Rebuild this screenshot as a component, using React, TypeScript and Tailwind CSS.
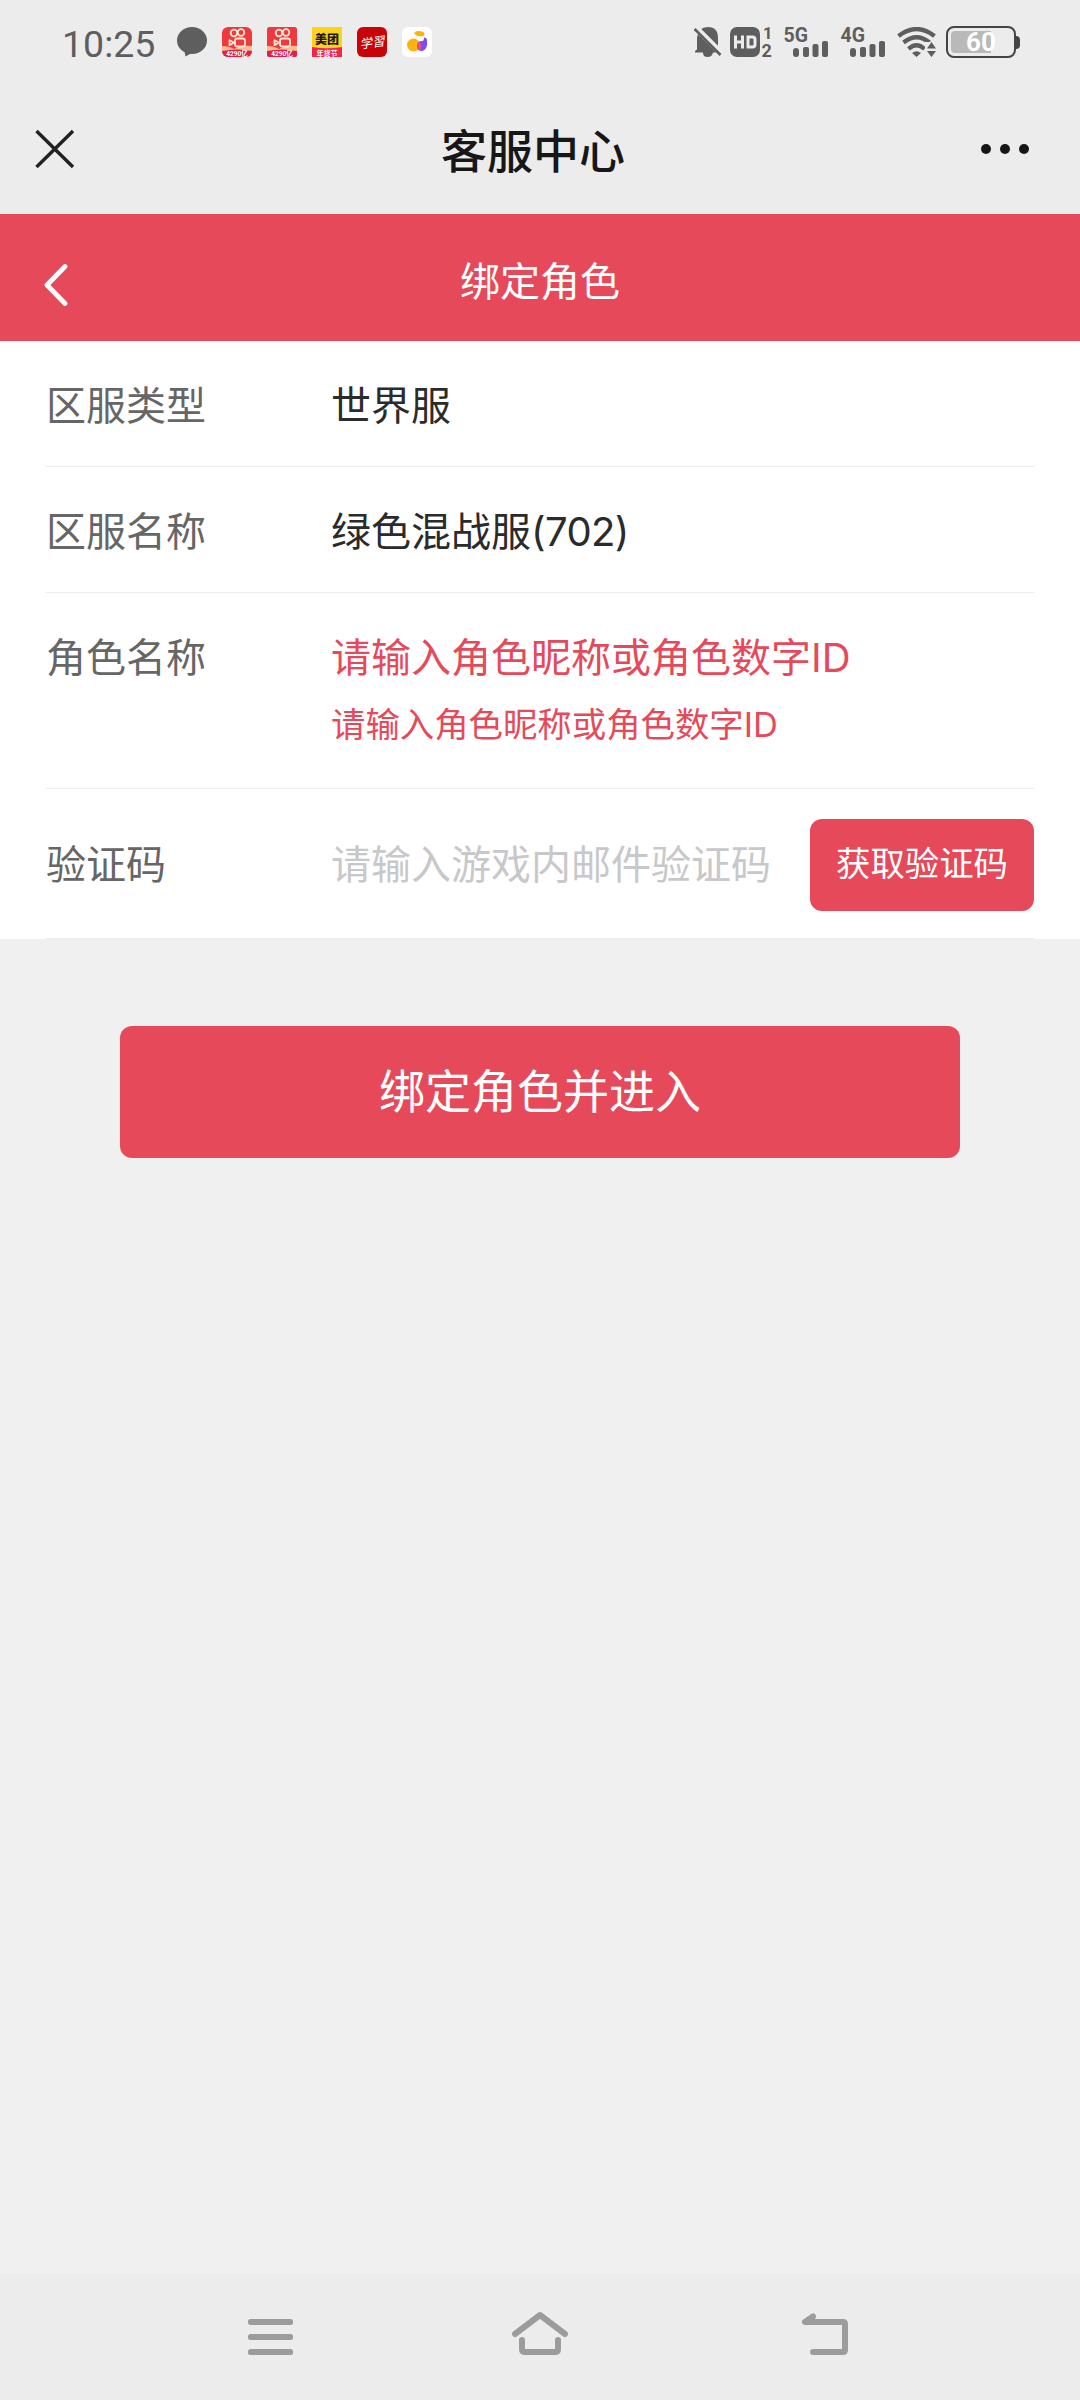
import React, { useState } from 'react';

const KuaishouIcon = ({ square = false }: { square?: boolean }) => (
    <svg width="30" height="30" viewBox="0 0 30 30">
        <clipPath id={square ? 'ks-square' : 'ks-round'}>
            <rect width="30" height="30" rx={square ? 2.5 : 6} />
        </clipPath>
        <g clipPath={square ? 'url(#ks-square)' : 'url(#ks-round)'}>
            <rect width="30" height="30" fill="#f0393f" />
            <path d="M0 19q7 0 12 3q8-4 18-3v11H0z" fill="#f6c08a" />
            <path d="M0 24q15-3 30 0v6H0z" fill="#e01f4c" />
            <g fill="none" stroke="#ffe9d6" strokeWidth="1.800">
                <circle cx="12" cy="6" r="3.300" />
                <circle cx="19" cy="5.500" r="3.300" />
                <rect x="13" y="11.500" width="10" height="8" rx="2.200" />
                <path d="M12 15.500l-4.500-2.300v5z" strokeLinejoin="round" />
            </g>
            <text x="15" y="28.500" textAnchor="middle" fontSize="6.500" fontWeight="700" fill="#fff" className="font-['Roboto','Noto_Sans_CJK_SC',sans-serif]">
                4290亿
            </text>
        </g>
    </svg>
);

const MeituanIcon = () => (
    <svg width="30" height="30" viewBox="0 0 30 30" className="font-['Noto_Sans_CJK_SC',sans-serif]">
        <rect width="30" height="30" fill="#fdd21f" />
        <path d="M0 20q15 2.500 30 0v10H0z" fill="#f5244f" />
        <text x="15" y="16.500" textAnchor="middle" fontSize="12" fontWeight="900" fill="#1c1a12">美团</text>
        <text x="15" y="28.500" textAnchor="middle" fontSize="7" fontWeight="700" fill="#fff">年货节</text>
    </svg>
);

const XuexiIcon = () => (
    <svg width="30" height="30" viewBox="0 0 30 30">
        <rect width="30" height="30" rx="6" fill="#c90409" />
        <text
            x="15"
            y="20"
            textAnchor="middle"
            fontSize="12.500"
            fill="#fff"
            transform="rotate(-8 15 15)"
            className="font-['Noto_Sans_CJK_SC',sans-serif] italic"
        >
            学習
        </text>
    </svg>
);

const FruitIcon = () => (
    <svg width="30" height="30" viewBox="0 0 30 30">
        <rect width="30" height="30" rx="6" fill="#fff" />
        <circle cx="11.500" cy="18" r="6.500" fill="#fbb40e" />
        <path d="M12.500 5q4-2 9 0q1.500 1.500 1 3.500q-5 2-9-.500q-1.500-1.500-1-3z" fill="#fbb40e" />
        <path d="M22 10.500q3 0 3 3q1 9-5 10.500q-5 0-5-5t5-5q2 0 2-3.500z" fill="#7b4df5" />
        <path d="M17.500 14.500q4 5 .500 9q-3-1.500-3-4.500t2.500-4.500z" fill="#f5477c" />
    </svg>
);

const Signal = ({ label }: { label: string }) => (
    <svg width="45" height="30" viewBox="0 0 45 30" fill="#5e5e5e" className="overflow-visible">
        <text x="-.500" y="14.500" fontSize="19.500" fontWeight="700" className="font-['Roboto',sans-serif]">{label}</text>
        <rect x="9" y="21" width="6" height="9" rx="3" />
        <rect x="19" y="20" width="6" height="10" rx="2" />
        <rect x="28.500" y="17" width="6" height="13" rx="2" />
        <rect x="38" y="14" width="6" height="16" rx="2" />
    </svg>
);

const StatusBar = () => (
    <div className="flex h-[84px] items-start justify-between pl-[62px] pr-[60px] pt-[27px] text-[#5e5e5e]">
        <div className="flex h-[30px] items-center">
            <span className="w-[115px] pt-[4px] font-['Roboto',sans-serif] text-[37.500px] leading-[32px]">10:25</span>
            <div className="flex gap-[15px]">
                <svg width="30" height="30" viewBox="0 0 30 30">
                    <ellipse cx="15" cy="13.500" rx="15" ry="13.500" fill="#5e5e5e" />
                    <path d="M7 22l1.500 7.500l9-5z" fill="#5e5e5e" />
                </svg>
                <KuaishouIcon />
                <KuaishouIcon square />
                <MeituanIcon />
                <XuexiIcon />
                <FruitIcon />
            </div>
        </div>

        <div className="flex h-[30px] items-center">
            <svg width="28" height="30" viewBox="0 0 28 30" className="mr-[8px]">
                <path d="M3 22.500V11Q4 0 14 0T24 11v8l3 5.500v1H19Q18 30 13.500 30T9 25.500H1V24z" fill="#5e5e5e" />
                <path d="M1 0L28 27" stroke="#ececec" strokeWidth="6" />
                <path d="M.500 2L26.500 28" stroke="#5e5e5e" strokeWidth="2.600" />
            </svg>
            <svg width="43" height="30" viewBox="0 0 43 30" className="mr-[11px] overflow-visible font-['Roboto',sans-serif]" fill="#5e5e5e">
                <rect width="30" height="30" rx="7" />
                <g fill="none" stroke="#ececec" strokeWidth="3">
                    <path d="M5.500 8.500v13M12.500 8.500v13M5.500 15h7" />
                    <path d="M18 10h4.500q2.500 0 2.500 2.500v5q0 2.500-2.500 2.500H18z" />
                </g>
                <text x="33" y="12" fontSize="16.500" fontWeight="700">1</text>
                <text x="31.500" y="30" fontSize="18" fontWeight="700">2</text>
            </svg>
            <Signal label="5G" />
            <div className="w-[12px]" />
            <Signal label="4G" />
            <svg width="40" height="30" viewBox="0 0 40 30" className="ml-[11px] mr-[9px]">
                <g fill="none" stroke="#5e5e5e" strokeWidth="4.200">
                    <path d="M1.500 9Q19.500-5 37.500 9" />
                    <path d="M6.500 15.500Q19.500 5 32.500 15.500" />
                    <path d="M11.500 22Q19.500 14.500 27.500 22" />
                </g>
                <path d="M15 26q4.500-3.500 9 0l-4.500 4z" fill="#5e5e5e" />
                <path d="M28 15h12v15H28z" fill="#ececec" />
                <path d="M30 21.500h9L34.500 15zM30 24h9l-4.500 6z" fill="#5e5e5e" />
            </svg>
            <div className="flex items-center">
                <div className="relative h-[32px] w-[70px] rounded-[8px] border-2 border-[#454545] p-[3px]">
                    <div className="h-full w-[40px] rounded-l-[4px] bg-[#b9b9b9]" />
                    <span className="absolute inset-0 text-center font-['Roboto',sans-serif] text-[26px] font-bold leading-[29px] text-white">60</span>
                </div>
                <div className="h-[13px] w-[4px] rounded-r-[4px] bg-[#454545]" />
            </div>
        </div>
    </div>
);

const TitleBar = () => (
    <div className="flex h-[130px] items-center justify-between pl-[35px] pr-[51px]">
        <svg width="40" height="40" viewBox="0 0 40 40" className="mb-[1px]">
            <path d="M1.500 2L38 38M38 2L1.500 38" stroke="#222" strokeWidth="3.400" />
        </svg>
        <h1 className="ml-[10px] pt-[4px] text-[46px] font-medium leading-none text-[#171717]">客服中心</h1>
        <div className="flex gap-[9px]">
            <i className="size-[10px] rounded-full bg-[#161616]" />
            <i className="size-[10px] rounded-full bg-[#161616]" />
            <i className="size-[10px] rounded-full bg-[#161616]" />
        </div>
    </div>
);

const Row = ({ label, className, children }: { label: string; className: string; children: React.ReactNode }) => (
    <div className={`flex border-b border-[#ededed] ${className}`}>
        <span className="w-[285px] shrink-0 text-[#666]">{label}</span>
        {children}
    </div>
);

export default function App() {
    const [code, setCode] = useState('');

    return (
        <div className="flex h-[2400px] w-[1080px] flex-col overflow-hidden bg-[#f0f0f0] font-['Inter','Noto_Sans_CJK_SC',sans-serif]">
            <header className="bg-[#ececec]">
                <StatusBar />
                <TitleBar />
            </header>

            {/* Page header */}
            <div className="grid h-[127px] grid-cols-[1fr_auto_1fr] items-center bg-[#e64a5a] text-white">
                <svg width="26" height="44" viewBox="0 0 26 44" className="ml-[42px] mt-[15px]">
                    <path d="M23 3.500L5 22l18 18.500" fill="none" stroke="#fff" strokeWidth="4.800" strokeLinecap="round" strokeLinejoin="round" />
                </svg>
                <h2 className="pt-[8px] text-[40px] leading-none">绑定角色</h2>
            </div>

            {/* Form */}
            <section className="bg-white px-[46px] text-[40px] leading-none text-[#2b2b2b]">
                <Row label="区服类型" className="h-[126px] items-center pt-[4px]">
                    <span>世界服</span>
                </Row>
                <Row label="区服名称" className="h-[126px] items-center pt-[4px]">
                    <span>绿色混战服<span className="tracking-[-0.6px]">(702)</span></span>
                </Row>
                <Row label="角色名称" className="h-[196px] items-start pt-[45px]">
                    <div className="text-[#e64a5a]">
                        <p>请输入角色昵称或角色数字ID</p>
                        <p className="mt-[30px] text-[34.400px]">请输入角色昵称或角色数字ID</p>
                    </div>
                </Row>
                <Row label="验证码" className="h-[150px] items-center pt-[2px]">
                    <input
                        value={code}
                        onChange={(e) => setCode(e.target.value)}
                        placeholder="请输入游戏内邮件验证码"
                        className="h-[60px] w-[460px] outline-none placeholder:text-[#c8c8ca]"
                    />
                    <button className="ml-auto h-[92px] w-[224px] rounded-[12px] bg-[#e64a5a] text-[34.400px] leading-none text-white">
                        获取验证码
                    </button>
                </Row>
            </section>

            <button className="mx-[120px] mt-[87px] h-[132px] rounded-[12px] bg-[#e64a5a] pb-[3px] text-[46px] leading-none text-white">
                绑定角色并进入
            </button>

            {/* System navigation */}
            <nav className="mt-auto flex h-[126px] items-start bg-[#ececec] pl-[247px] pt-[36px]">
                <svg width="46" height="50" viewBox="0 0 46 50" fill="#9c9c9c">
                    <rect x="1" y="9" width="45" height="6" rx="2.500" />
                    <rect x="1" y="24" width="45" height="6" rx="2.500" />
                    <rect x="1" y="39" width="45" height="6" rx="2.500" />
                </svg>
                <svg width="60" height="50" viewBox="0 0 60 50" fill="none" stroke="#9c9c9c" strokeWidth="6" strokeLinecap="round" strokeLinejoin="round" className="ml-[217px]">
                    <path d="M5 24L30 5l25 19" />
                    <path d="M12 30v9q0 3 3 3h30q3 0 3-3v-9" />
                </svg>
                <svg width="52" height="50" viewBox="0 0 52 50" fill="none" stroke="#9c9c9c" strokeWidth="6" strokeLinecap="round" strokeLinejoin="round" className="ml-[229px]">
                    <path d="M14 6.500L6 12h38q2 0 2 2v26q0 2-2 2H14" />
                    <path d="M14 6.500L6 12h7z" fill="#9c9c9c" strokeWidth="3" />
                </svg>
            </nav>
        </div>
    );
}
